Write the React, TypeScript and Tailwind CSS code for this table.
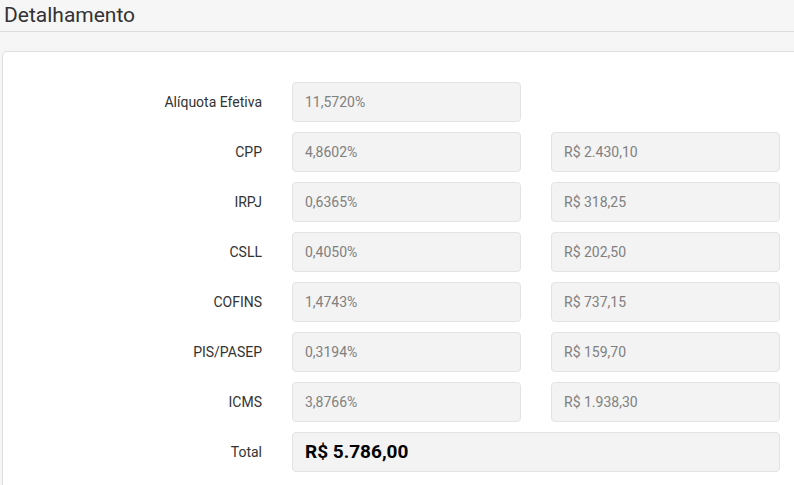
const rows: { label: string; rate: string; value?: string }[] = [
  { label: 'Alíquota Efetiva', rate: '11,5720%' },
  { label: 'CPP', rate: '4,8602%', value: 'R$ 2.430,10' },
  { label: 'IRPJ', rate: '0,6365%', value: 'R$ 318,25' },
  { label: 'CSLL', rate: '0,4050%', value: 'R$ 202,50' },
  { label: 'COFINS', rate: '1,4743%', value: 'R$ 737,15' },
  { label: 'PIS/PASEP', rate: '0,3194%', value: 'R$ 159,70' },
  { label: 'ICMS', rate: '3,8766%', value: 'R$ 1.938,30' },
];

function Field({ children, className = '' }: { children: React.ReactNode; className?: string }) {
  return (
    <div
      className={`h-[40px] flex items-center px-[12px] bg-[#f3f3f3] border border-[#e3e3e3] rounded-[4px] ${className}`}
    >
      {children}
    </div>
  );
}

export default function App() {
  return (
    <div
      className="w-[794px] h-[485px] overflow-hidden bg-[#f6f6f6]"
      style={{ fontFamily: 'Roboto, "Liberation Sans", sans-serif' }}
    >
      <div className="h-[32px] border-b border-[#dedede] pl-[4px]">
        <h2 className="text-[21px] leading-[31px] text-[#333]">Detalhamento</h2>
      </div>
      <div className="mt-[19px] ml-[2px] w-[830px] h-[460px] bg-white border border-[#dddddd] rounded-[5px] pt-[30px]">
        <div className="flex flex-col gap-[10px]">
          {rows.map((r) => (
            <div key={r.label} className="flex items-center">
              <div className="w-[259px] text-right text-[14px] text-[#333]">{r.label}</div>
              <Field className="ml-[30px] w-[229px] text-[14px] text-[#808080]">{r.rate}</Field>
              {r.value && (
                <Field className="ml-[30px] w-[229px] text-[14px] text-[#808080]">{r.value}</Field>
              )}
            </div>
          ))}
          <div className="flex items-center">
            <div className="w-[259px] text-right text-[14px] text-[#333]">Total</div>
            <Field className="ml-[30px] w-[488px] text-[19px] font-bold text-black">R$ 5.786,00</Field>
          </div>
        </div>
      </div>
    </div>
  );
}
